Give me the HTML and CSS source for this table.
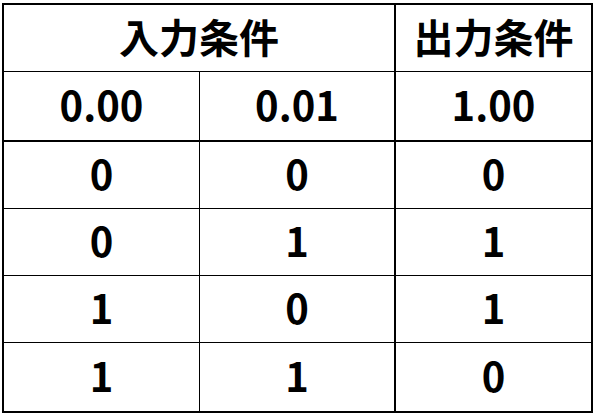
FILE: index.html
```
<!DOCTYPE html>
<html lang="ja">
<head>
<meta charset="utf-8">
<link rel="stylesheet" href="styles.css">
</head>
<body>
<div class="truth" role="table">
  <div class="cell span2 bb1 br2">入力条件</div>
  <div class="cell bb1">出力条件</div>
  <div class="cell br1 bb2">0.00</div>
  <div class="cell br2 bb2">0.01</div>
  <div class="cell bb2">1.00</div>
  <div class="cell br1 bb1">0</div>
  <div class="cell br2 bb1">0</div>
  <div class="cell bb1">0</div>
  <div class="cell br1 bb1">0</div>
  <div class="cell br2 bb1">1</div>
  <div class="cell bb1">1</div>
  <div class="cell br1 bb1">1</div>
  <div class="cell br2 bb1">0</div>
  <div class="cell bb1">1</div>
  <div class="cell br1">1</div>
  <div class="cell br2">1</div>
  <div class="cell">0</div>
</div>
</body>
</html>
```
FILE: styles.css
```
html, body {
  margin: 0;
  padding: 0;
  background: #fff;
}
.truth {
  margin: 3px 0 0 2px;
  width: 591px;
  box-sizing: border-box;
  border: 2px solid #000;
  display: grid;
  grid-template-columns: 196px 196px 195px;
  grid-template-rows: 67px 70px 67px 67px 67px 68px;
  font-family: "Noto Sans CJK JP", "Noto Sans", sans-serif;
  font-weight: 700;
  font-size: 40px;
  line-height: 1;
  color: #000;
}
.cell {
  box-sizing: border-box;
  display: flex;
  align-items: center;
  justify-content: center;
  padding-bottom: 5px;
}
.span2 { grid-column: span 2; }
.br1 { border-right: 1px solid #000; }
.br2 { border-right: 2px solid #000; }
.bb1 { border-bottom: 1px solid #000; }
.bb2 { border-bottom: 2px solid #000; }
```
